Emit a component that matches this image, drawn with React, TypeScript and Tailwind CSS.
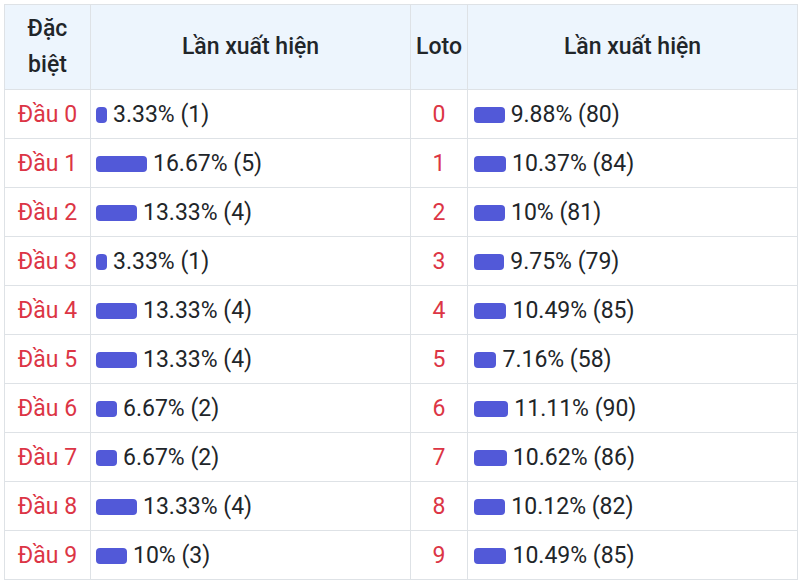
import React from "react";

const dacBiet = [
  { pct: 3.33, label: "3.33% (1)" },
  { pct: 16.67, label: "16.67% (5)" },
  { pct: 13.33, label: "13.33% (4)" },
  { pct: 3.33, label: "3.33% (1)" },
  { pct: 13.33, label: "13.33% (4)" },
  { pct: 13.33, label: "13.33% (4)" },
  { pct: 6.67, label: "6.67% (2)" },
  { pct: 6.67, label: "6.67% (2)" },
  { pct: 13.33, label: "13.33% (4)" },
  { pct: 10, label: "10% (3)" },
];

const loto = [
  { pct: 9.88, label: "9.88% (80)" },
  { pct: 10.37, label: "10.37% (84)" },
  { pct: 10, label: "10% (81)" },
  { pct: 9.75, label: "9.75% (79)" },
  { pct: 10.49, label: "10.49% (85)" },
  { pct: 7.16, label: "7.16% (58)" },
  { pct: 11.11, label: "11.11% (90)" },
  { pct: 10.62, label: "10.62% (86)" },
  { pct: 10.12, label: "10.12% (82)" },
  { pct: 10.49, label: "10.49% (85)" },
];

function Bar({ pct, label }: { pct: number; label: string }) {
  return (
    <div className="flex items-center gap-[6px]">
      <span
        className="inline-block h-[16px] rounded-[4px] bg-[#5259d8] shrink-0"
        style={{ width: `${pct * 3 + 1}px` }}
      />
      <span>{label}</span>
    </div>
  );
}

export default function App() {
  return (
    <div className="w-[800px] h-[582px] bg-white pl-[4px] pt-[4px] font-['Roboto',sans-serif] text-[#212529]">
      <table className="table-fixed border-collapse w-[793px] text-[23px]">
        <colgroup>
          <col className="w-[86px]" />
          <col className="w-[320px]" />
          <col className="w-[57px]" />
          <col className="w-[330px]" />
        </colgroup>
        <thead>
          <tr className="h-[85px] bg-[#edf5fd]">
            <th className="border border-[#dee2e6] font-medium leading-[36px] text-center">
              Đặc
              <br />
              biệt
            </th>
            <th className="border border-[#dee2e6] font-medium text-center">Lần xuất hiện</th>
            <th className="border border-[#dee2e6] font-medium text-center">Loto</th>
            <th className="border border-[#dee2e6] font-medium text-center">Lần xuất hiện</th>
          </tr>
        </thead>
        <tbody>
          {dacBiet.map((d, i) => (
            <tr key={i} className="h-[49px]">
              <td className="border border-[#dee2e6] pt-[2px] text-center text-[#dc3545]">Đầu {i}</td>
              <td className="border border-[#dee2e6] pt-[2px] pl-[5px]">
                <Bar pct={d.pct} label={d.label} />
              </td>
              <td className="border border-[#dee2e6] pt-[2px] text-center text-[#dc3545]">{i}</td>
              <td className="border border-[#dee2e6] pt-[2px] pl-[6px]">
                <Bar pct={loto[i].pct} label={loto[i].label} />
              </td>
            </tr>
          ))}
        </tbody>
      </table>
    </div>
  );
}
